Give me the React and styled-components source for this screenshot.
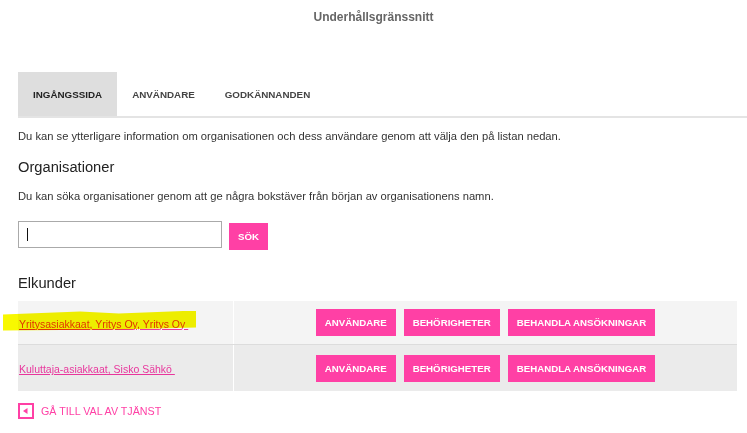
import React from 'react'
import styled, { createGlobalStyle } from 'styled-components'

const GlobalStyle = createGlobalStyle`
  body {
    margin: 0;
    background: #fff;
    font-family: "Liberation Sans", Arial, sans-serif;
    color: #333;
  }
`;

const Page = styled.div`
  padding: 9px 10px 0 18px;
`;

const Title = styled.h1`
  margin: 0 -10px 47px -18px;
  text-align: center;
  font-size: 12px;
  line-height: 16px;
  font-weight: bold;
  color: #666;
`;

const Tabs = styled.div`
  display: flex;
  margin-right: -10px;
  border-bottom: 2px solid #e4e4e4;
`;

const Tab = styled.div`
  height: 44px;
  display: flex;
  align-items: center;
  padding: 0 15px;
  font-size: 9.8px;
  font-weight: bold;
  text-transform: uppercase;
  color: ${p => (p.$active ? '#222' : '#444')};
  background: ${p => (p.$active ? '#dedede' : 'transparent')};
`;

const Text = styled.p`
  margin: ${p => p.$mt || 0}px 0 0;
  font-size: 11.2px;
  line-height: 13px;
  color: #333;
`;

const Heading = styled.h2`
  margin: ${p => p.$mt || 0}px 0 0;
  font-size: 14.7px;
  line-height: 18px;
  font-weight: normal;
  color: #222;
`;

const SearchRow = styled.div`
  display: flex;
  align-items: flex-start;
  gap: 7px;
  margin-top: 18px;
`;

const SearchBox = styled.div`
  width: 194px;
  height: 25px;
  border: 1px solid #aaa;
  display: flex;
  align-items: center;
  padding-left: 8px;
  box-sizing: content-box;
`;

const Caret = styled.span`
  flex-shrink: 0;
  width: 1px;
  height: 13px;
  background: #111;
`;

const SearchInput = styled.input`
  flex: 1;
  min-width: 0;
  border: none;
  outline: none;
  background: transparent;
  font: inherit;
`;

const PinkButton = styled.button`
  height: 27px;
  margin-top: ${p => p.$mt || 0}px;
  padding: 0 ${p => p.$px || 9}px;
  border: none;
  background: #ff40a5;
  color: #fff;
  font-family: "Liberation Sans", Arial, sans-serif;
  font-size: 9.7px;
  font-weight: bold;
  text-transform: uppercase;
  cursor: pointer;
`;

const Table = styled.div`
  margin-top: 9px;
  width: 719px;
`;

const Row = styled.div`
  display: grid;
  grid-template-columns: 216px 1fr;
  height: ${p => p.$h}px;
  background: ${p => p.$bg};
  border-bottom: ${p => (p.$line ? '1px solid #dcdcdc' : 'none')};
`;

const NameCell = styled.div`
  display: flex;
  align-items: center;
  padding-left: 1px;
  border-right: 1px solid #fff;
`;

const ActionCell = styled.div`
  display: flex;
  align-items: center;
  justify-content: center;
  gap: 8px;
`;

const LinkWrap = styled.span`
  position: relative;
`;

const OrgLink = styled.a`
  font-size: 10.5px;
  color: #e8369c;
  text-decoration: underline;
  white-space: pre;
`;

const Highlight = styled.span`
  position: absolute;
  left: -16px;
  top: -3px;
  width: 193px;
  height: 20px;
  background: #f8f800;
  mix-blend-mode: multiply;
  clip-path: polygon(0 20%, 40% 5%, 60% 15%, 100% 0, 100% 85%, 60% 95%, 0 100%);
`;

const BackLink = styled.a`
  margin-top: 12px;
  display: flex;
  align-items: center;
  gap: 7px;
  font-size: 10.7px;
  color: #ff40a5;
  text-transform: uppercase;
  text-decoration: none;
`;

const BackIcon = () => (
  <svg width="16" height="16" viewBox="0 0 16 16">
    <rect x="1" y="1" width="14" height="14" fill="#fff" stroke="#ff40a5" strokeWidth="2" />
    <polygon points="5,8 9.5,5 9.5,11" fill="#ff40a5" />
  </svg>
);

const customers = [
  { name: 'Yritysasiakkaat, Yritys Oy, Yritys Oy ', bg: '#f4f4f4', h: 43, marked: true },
  { name: 'Kuluttaja-asiakkaat, Sisko Sähkö ', bg: '#ebebeb', h: 46 },
];

export default function App() {
  return (
    <>
      <GlobalStyle />
      <Page>
        <Title>Underhållsgränssnitt</Title>
        <Tabs>
          <Tab $active>Ingångssida</Tab>
          <Tab>Användare</Tab>
          <Tab>Godkännanden</Tab>
        </Tabs>

        <Text $mt={12}>
          Du kan se ytterligare information om organisationen och dess användare genom att välja den på listan nedan.
        </Text>
        <Heading $mt={15}>Organisationer</Heading>
        <Text $mt={14}>
          Du kan söka organisationer genom att ge några bokstäver från början av organisationens namn.
        </Text>

        <SearchRow>
          <SearchBox>
            <Caret />
            <SearchInput />
          </SearchBox>
          <PinkButton $mt={2}>Sök</PinkButton>
        </SearchRow>

        <Heading $mt={24}>Elkunder</Heading>

        <Table>
          {customers.map((c, i) => (
            <Row key={i} $bg={c.bg} $h={c.h} $line={i === 0}>
              <NameCell>
                <LinkWrap>
                  <OrgLink href="#">{c.name}</OrgLink>
                  {c.marked && <Highlight />}
                </LinkWrap>
              </NameCell>
              <ActionCell>
                <PinkButton>Användare</PinkButton>
                <PinkButton>Behörigheter</PinkButton>
                <PinkButton>Behandla ansökningar</PinkButton>
              </ActionCell>
            </Row>
          ))}
        </Table>

        <BackLink href="#">
          <BackIcon />
          Gå till val av tjänst
        </BackLink>
      </Page>
    </>
  );
}
